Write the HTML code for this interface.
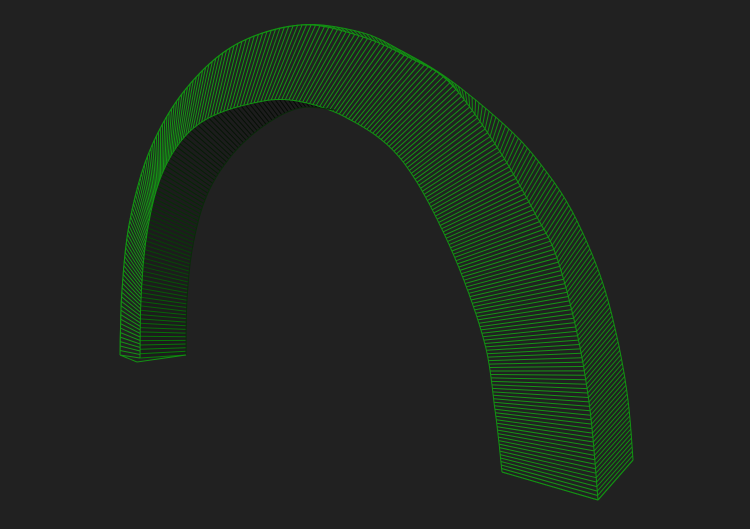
<!DOCTYPE html>
<html><head><meta charset="utf-8"><style>
html,body{margin:0;padding:0;background:#212121;width:750px;height:529px;overflow:hidden}
svg{display:block}
</style></head><body>
<svg id="s" width="750" height="529" viewBox="0 0 750 529" xmlns="http://www.w3.org/2000/svg">
<rect width="750" height="529" fill="#212121"/>
<g id="g"></g>
</svg>
<script>
function cr(pts,n){
  var out=[];
  for(var i=0;i<pts.length-1;i++){
    var p0=pts[Math.max(0,i-1)],p1=pts[i],p2=pts[i+1],p3=pts[Math.min(pts.length-1,i+2)];
    for(var k=0;k<20;k++){var t=k/20,t2=t*t,t3=t2*t;
      out.push([0.5*((2*p1[0])+(-p0[0]+p2[0])*t+(2*p0[0]-5*p1[0]+4*p2[0]-p3[0])*t2+(-p0[0]+3*p1[0]-3*p2[0]+p3[0])*t3),
                0.5*((2*p1[1])+(-p0[1]+p2[1])*t+(2*p0[1]-5*p1[1]+4*p2[1]-p3[1])*t2+(-p0[1]+3*p1[1]-3*p2[1]+p3[1])*t3)]);}
  }
  out.push(pts[pts.length-1]);
  var L=[0];for(var i=1;i<out.length;i++){L.push(L[i-1]+Math.hypot(out[i][0]-out[i-1][0],out[i][1]-out[i-1][1]));}
  var tot=L[L.length-1],res=[],j=0;
  for(var s=0;s<=n;s++){var d=tot*s/n;while(j<L.length-2&&L[j+1]<d)j++;
    var f=(d-L[j])/((L[j+1]-L[j])||1);res.push([out[j][0]+(out[j+1][0]-out[j][0])*f,out[j][1]+(out[j+1][1]-out[j][1])*f]);}
  return res;
}
var N=230;
var P=cr([[120,355],[122,290],[130,220],[150,150],[185,90],[235,45],[300,25],[360,32],[400,50],[450,80],[510,130],[545,170],[573,213],[600,275],[617,337],[628,400],[633,460]],N);
var R=cr([[120,355],[122,290],[130,220],[150,150],[185,90],[235,45],[300,25],[360,36],[410,58],[450,83],[497,147],[537,217],[557,258],[577,333],[590,410],[598,500]],N);
var Q=cr([[140,358],[141,300],[146,240],[158,185],[178,145],[205,120],[245,105],[290,100],[345,117],[400,158],[447,240],[483,337],[495,410],[502,472]],N);
var T=cr([[186,355],[187,300],[193,245],[207,195],[232,155],[265,125],[300,108],[335,110]],90);
var Qs=cr([[140,358],[141,300],[146,240],[158,185],[178,145],[205,120],[245,105],[290,100],[335,110]],90);
var h='';
function ln(a,b,c,w){h+='<line x1="'+a[0].toFixed(1)+'" y1="'+a[1].toFixed(1)+'" x2="'+b[0].toFixed(1)+'" y2="'+b[1].toFixed(1)+'" stroke="'+c+'" stroke-width="'+(w||1)+'"/>';}
function pl(A,c){var d='M'+A.map(function(p){return p[0].toFixed(1)+','+p[1].toFixed(1)}).join(' L');h+='<path d="'+d+'" fill="none" stroke="'+c+'" stroke-width="1"/>';}
var ip=Qs.concat(T.slice().reverse());
h+='<path d="M'+ip.map(function(p){return p[0].toFixed(1)+','+p[1].toFixed(1)}).join(' L')+'Z" fill="#1c1c1c"/>';
for(var i=0;i<=90;i+=1){var f=i/90;var g=Math.round(8+ (1-f)*(1-f)*120);ln(Qs[i],T[i],'rgb(6,'+g+',6)',1);}
for(var i=0;i<=N;i++){ln(R[i],Q[i],'#159515',1);}
for(var i=0;i<=N;i++){var a=P[i],b=R[i];if(Math.hypot(a[0]-b[0],a[1]-b[1])>1.5)ln(a,b,'#138d13',1);}
pl(P,'#129212');pl(R,'#129212');pl(Q,'#129212');pl(T,'#0a2a0a');
ln([120,355],[137,362],'#129212');ln([137,362],[186,355],'#129212');
ln([502,472],[598,500],'#129212');ln([598,500],[633,460],'#129212');
document.getElementById('g').innerHTML=h;
</script>
</body></html>
